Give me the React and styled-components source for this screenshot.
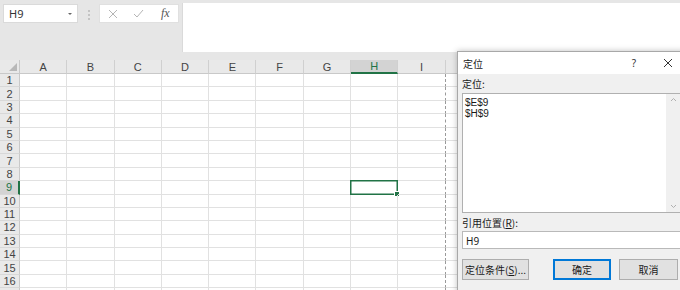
import React from "react";
import styled, { createGlobalStyle } from "styled-components";

const GlobalStyle = createGlobalStyle`
  html, body { margin: 0; padding: 0; background: #ffffff; }
  body { font-family: "Noto Sans", "Noto Sans CJK SC", sans-serif; }
`;

const Window = styled.div`
  position: relative;
  width: 680px;
  height: 290px;
  overflow: hidden;
  background: #e6e6e6;
`;

const TopBar = styled.div`
  display: flex;
  align-items: flex-start;
  height: 60px;
  padding: 3px 0 0 3px;
  box-sizing: border-box;
`;

const NameBox = styled.div`
  display: flex;
  align-items: center;
  justify-content: space-between;
  width: 75px;
  height: 19px;
  margin-top: 1px;
  padding: 0 5px 0 5px;
  box-sizing: border-box;
  background: #fff;
  border: 1px solid #dadada;
  font-size: 11px;
  color: #333;
`;

const Caret = styled.span`
  width: 0;
  height: 0;
  border-left: 2px solid transparent;
  border-right: 2px solid transparent;
  border-top: 2px solid #666;
`;

const Dots = styled.div`
  display: flex;
  flex-direction: column;
  gap: 2px;
  margin: 7px 9px 0 10px;
  span { width: 2px; height: 2px; background: #c4c4c4; }
`;

const FxBox = styled.div`
  display: flex;
  align-items: center;
  width: 80px;
  height: 19px;
  margin-top: 1px;
  background: #fff;
  border: 1px solid #e0e0e0;
  box-sizing: border-box;
`;

const FxButton = styled.div`
  width: ${(p) => p.$w}px;
  display: flex;
  justify-content: center;
  align-items: center;
  color: #b5b5b5;
`;

const FxText = styled.span`
  font-family: "Liberation Serif", serif;
  font-style: italic;
  font-size: 12px;
  color: #555;
`;

const FormulaInput = styled.div`
  flex: 1;
  height: 49px;
  margin-left: 3px;
  background: #fff;
  border-left: 1px solid #dadada;
`;

const Sheet = styled.div`
  display: grid;
  grid-template-columns: 20px repeat(11, 47.3px);
  grid-template-rows: 14px;
  grid-auto-rows: 13.4px;
  background: #fff;
  font-family: "Liberation Sans", sans-serif;
`;

const Corner = styled.div`
  position: relative;
  background: #e9e9e9;
  border-right: 1px solid #c9c9c9;
  border-bottom: 1px solid #c9c9c9;
  box-sizing: border-box;
  &::after {
    content: "";
    position: absolute;
    right: 2px;
    bottom: 2px;
    width: 0;
    height: 0;
    border-left: 8px solid transparent;
    border-bottom: 8px solid #b8b8b8;
  }
`;

const ColHead = styled.div`
  display: flex;
  align-items: center;
  justify-content: center;
  font-size: 11px;
  line-height: 12px;
  color: ${(p) => (p.$active ? "#217346" : "#444")};
  background: ${(p) => (p.$active ? "#d3d3d3" : "#e9e9e9")};
  border-right: 1px solid #d0d0d0;
  border-bottom: ${(p) => (p.$active ? "2px solid #217346" : "1px solid #c9c9c9")};
  box-sizing: border-box;
`;

const RowHead = styled.div`
  display: flex;
  align-items: center;
  justify-content: center;
  font-size: 11px;
  line-height: 12px;
  color: ${(p) => (p.$active ? "#217346" : "#444")};
  background: ${(p) => (p.$active ? "#d3d3d3" : "#e9e9e9")};
  border-right: ${(p) => (p.$active ? "2px solid #217346" : "1px solid #c9c9c9")};
  border-bottom: 1px solid #d8d8d8;
  box-sizing: border-box;
`;

const Cell = styled.div`
  position: relative;
  box-sizing: border-box;
  border-right: 1px ${(p) => (p.$pageBreak ? "dashed #9a9a9a" : "solid #e1e1e1")};
  border-bottom: 1px solid #e1e1e1;
  ${(p) =>
    p.$selected &&
    `
    &::before {
      content: "";
      position: absolute;
      left: -1px; top: -1px; right: -1px; bottom: -1px;
      border: 1px solid #217346;
      box-shadow: inset 0 0 0 0.5px #217346;
    }
    &::after {
      content: "";
      position: absolute;
      right: -3px; bottom: -3px;
      width: 4px; height: 4px;
      background: #217346;
      border: 1px solid #fff;
    }
  `}
`;

const Dialog = styled.div`
  position: absolute;
  left: 457px;
  top: 51px;
  width: 227px;
  height: 260px;
  background: #f0f0f0;
  border: 1px solid #a8a8a8;
  box-shadow: 0 0 6px rgba(0, 0, 0, 0.25);
  font-family: "Noto Sans CJK SC", "Noto Sans", sans-serif;
  font-size: 10px;
  color: #1a1a1a;
`;

const TitleBar = styled.div`
  display: flex;
  align-items: center;
  height: 22px;
  background: #fff;
  padding-left: 5px;
`;

const Title = styled.div`
  flex: 1;
`;

const TitleButton = styled.div`
  width: 34px;
  display: flex;
  justify-content: center;
  align-items: center;
  font-family: "Noto Sans", sans-serif;
  font-size: 10px;
  color: #333;
`;

const Body = styled.div`
  padding: 0 4px;
`;

const Label = styled.div`
  height: ${(p) => p.$h}px;
  line-height: ${(p) => p.$h + 1}px;
  u { text-decoration: underline; }
`;

const ListBox = styled.div`
  display: flex;
  height: 120px;
  background: #fff;
  border: 1px solid #b0b0b0;
  box-sizing: border-box;
`;

const ListItems = styled.div`
  flex: 1;
  padding: 3px 2px;
  font-family: "Liberation Sans", sans-serif;
  font-size: 10px;
  line-height: 11px;
`;

const ScrollBar = styled.div`
  width: 13px;
  display: flex;
  flex-direction: column;
  justify-content: space-between;
  align-items: center;
  padding: 3px 0;
  background: #f0f0f0;
  border-left: 1px solid #f0f0f0;
`;

const Input = styled.div`
  height: 18px;
  line-height: 18px;
  padding-left: 3px;
  background: #fff;
  border: 1px solid #b9b9b9;
  box-sizing: border-box;
  font-family: "Noto Sans", sans-serif;
  font-size: 10px;
`;

const ButtonRow = styled.div`
  display: flex;
  margin-top: 10px;
  gap: 8px;
`;

const Button = styled.div`
  width: ${(p) => p.$w}px;
  height: 21px;
  display: flex;
  align-items: center;
  justify-content: center;
  margin-right: ${(p) => p.$gap || 0}px;
  background: #e1e1e1;
  border: 1px solid ${(p) => (p.$primary ? "#0078d7" : "#adadad")};
  box-shadow: ${(p) => (p.$primary ? "inset 0 0 0 1px #0078d7" : "none")};
  box-sizing: border-box;
  font-size: 10px;
  u { text-decoration: underline; }
`;

const cols = ["A", "B", "C", "D", "E", "F", "G", "H", "I", "J", "K"];
// J and K lie under the dialog, so their headers carry no visible label
const hiddenCols = ["J", "K"];
const rows = Array.from({ length: 16 }, (_, i) => i + 1);

const Chevron = ({ up }) => (
  <svg width="7" height="5" viewBox="0 0 7 5">
    <path
      d={up ? "M1 4 L3.5 1.5 L6 4" : "M1 1 L3.5 3.5 L6 1"}
      fill="none"
      stroke="#b0b0b0"
      strokeWidth="1"
    />
  </svg>
);

export default function App() {
  return (
    <Window>
      <GlobalStyle />
      <TopBar>
        <NameBox>
          <span>H9</span>
          <Caret />
        </NameBox>
        <Dots>
          <span />
          <span />
          <span />
        </Dots>
        <FxBox>
          <FxButton $w={26}>
            <svg width="10" height="10" viewBox="0 0 10 10">
              <path d="M1 1 L9 9 M9 1 L1 9" stroke="#b5b5b5" strokeWidth="1" />
            </svg>
          </FxButton>
          <FxButton $w={28}>
            <svg width="11" height="9" viewBox="0 0 11 9">
              <path d="M1 5 L4 8 L10 1" fill="none" stroke="#b5b5b5" strokeWidth="1" />
            </svg>
          </FxButton>
          <FxButton $w={26}>
            <FxText>fx</FxText>
          </FxButton>
        </FxBox>
        <FormulaInput />
      </TopBar>

      <Sheet>
        <Corner />
        {cols.map((c) => (
          <ColHead key={c} $active={c === "H"}>
            {hiddenCols.includes(c) ? null : c}
          </ColHead>
        ))}
        {rows.map((r) => (
          <React.Fragment key={r}>
            <RowHead $active={r === 9}>{r}</RowHead>
            {cols.map((c) => (
              <Cell
                key={c + r}
                $selected={r === 9 && c === "H"}
                $pageBreak={c === "I"}
              />
            ))}
          </React.Fragment>
        ))}
        <RowHead />
        {cols.map((c) => (
          <Cell key={c + "17"} $pageBreak={c === "I"} />
        ))}
      </Sheet>

      <Dialog>
        <TitleBar>
          <Title>定位</Title>
          <TitleButton>?</TitleButton>
          <TitleButton>
            <svg width="10" height="10" viewBox="0 0 10 10">
              <path d="M1 1 L9 9 M9 1 L1 9" stroke="#333" strokeWidth="1" />
            </svg>
          </TitleButton>
        </TitleBar>
        <Body>
          <Label $h={19}>定位:</Label>
          <ListBox>
            <ListItems>
              <div>$E$9</div>
              <div>$H$9</div>
            </ListItems>
            <ScrollBar>
              <Chevron up />
              <Chevron />
            </ScrollBar>
          </ListBox>
          <Label $h={18}>
            引用位置(<u>R</u>):
          </Label>
          <Input>H9</Input>
          <ButtonRow>
            <Button $w={67} $gap={16}>
              定位条件(<u>S</u>)...
            </Button>
            <Button $w={58} $primary>
              确定
            </Button>
            <Button $w={59}>取消</Button>
          </ButtonRow>
        </Body>
      </Dialog>
    </Window>
  );
}
